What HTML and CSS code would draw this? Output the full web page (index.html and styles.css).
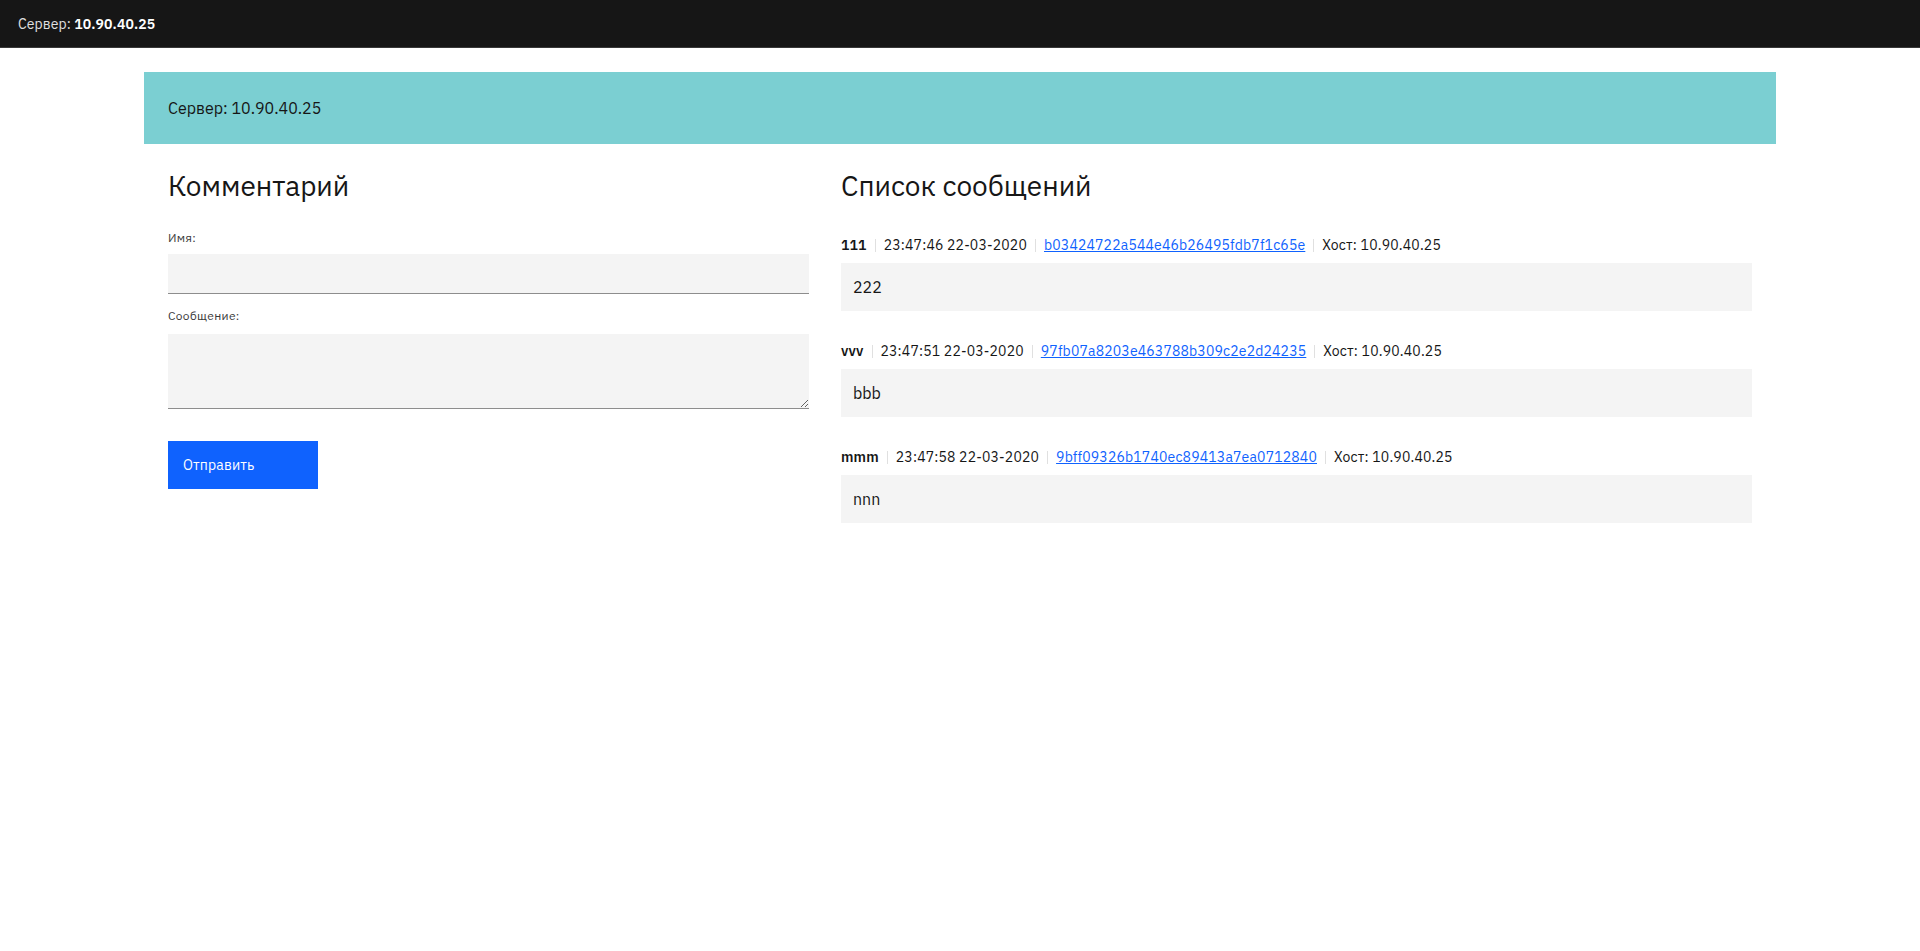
FILE: index.html
```html
<!DOCTYPE html>
<html lang="ru">
<head>
<meta charset="utf-8">
<title>Сервер: 10.90.40.25</title>
<link rel="stylesheet" href="styles.css">
</head>
<body>
<header class="app-header">
  <span class="app-header__prefix">Сервер:</span>&nbsp;<span class="app-header__name">10.90.40.25</span>
</header>
<main class="container">
  <div class="banner">Сервер: 10.90.40.25</div>
  <div class="columns">
    <section class="col-form">
      <h2 class="heading">Комментарий</h2>
      <form class="form">
        <div class="form-item">
          <label class="label" for="name">Имя:</label>
          <input class="text-input" id="name" type="text">
        </div>
        <div class="form-item form-item--area">
          <label class="label label--area" for="msg">Сообщение:</label>
          <textarea class="text-area" id="msg"></textarea>
        </div>
        <button class="btn-primary" type="button">Отправить</button>
      </form>
    </section>
    <section class="col-list">
      <h2 class="heading">Список сообщений</h2>
      <div class="messages">
        <div class="message">
          <div class="meta">
            <span class="meta__author">111</span>
            <span class="meta__sep"></span>
            <span class="meta__item">23:47:46 22-03-2020</span>
            <span class="meta__sep"></span>
            <a class="meta__link" href="#">b03424722a544e46b26495fdb7f1c65e</a>
            <span class="meta__sep"></span>
            <span class="meta__item">Хост: 10.90.40.25</span>
          </div>
          <div class="message__body">222</div>
        </div>
        <div class="message">
          <div class="meta">
            <span class="meta__author">vvv</span>
            <span class="meta__sep"></span>
            <span class="meta__item">23:47:51 22-03-2020</span>
            <span class="meta__sep"></span>
            <a class="meta__link" href="#">97fb07a8203e463788b309c2e2d24235</a>
            <span class="meta__sep"></span>
            <span class="meta__item">Хост: 10.90.40.25</span>
          </div>
          <div class="message__body">bbb</div>
        </div>
        <div class="message">
          <div class="meta">
            <span class="meta__author">mmm</span>
            <span class="meta__sep"></span>
            <span class="meta__item">23:47:58 22-03-2020</span>
            <span class="meta__sep"></span>
            <a class="meta__link" href="#">9bff09326b1740ec89413a7ea0712840</a>
            <span class="meta__sep"></span>
            <span class="meta__item">Хост: 10.90.40.25</span>
          </div>
          <div class="message__body">nnn</div>
        </div>
      </div>
    </section>
  </div>
</main>
</body>
</html>
```

FILE: styles.css
```css
* { box-sizing: border-box; }

html, body {
  margin: 0;
  padding: 0;
  background: #ffffff;
  color: #161616;
  font-family: "IBM Plex Sans", "Open Sans", "Noto Sans", sans-serif;
}

.app-header {
  height: 48px;
  background: #161616;
  border-bottom: 1px solid #393939;
  display: flex;
  align-items: center;
  padding-left: 18px;
  font-size: 14px;
  letter-spacing: 0.1px;
  color: #f4f4f4;
}

.app-header__prefix { font-weight: 400; color: #e0e0e0; }
.app-header__name { font-weight: 600; color: #ffffff; }

.container {
  margin: 24px 144px 0;
}

.banner {
  height: 72px;
  background: #7bcfd2;
  display: flex;
  align-items: center;
  padding-left: 24px;
  font-size: 16px;
  color: #161616;
}

.columns {
  display: grid;
  grid-template-columns: 641px 1fr;
  column-gap: 32px;
  padding: 24px 24px 0;
}

.heading {
  margin: 0;
  font-size: 28px;
  line-height: 36px;
  font-weight: 400;
  color: #161616;
}

.form { margin-top: 26px; }

.form-item { margin-bottom: 14px; }
.form-item--area { margin-bottom: 32px; }

.label {
  display: block;
  font-size: 12px;
  line-height: 16px;
  letter-spacing: 0.32px;
  color: #393939;
  margin-bottom: 8px;
}

.label--area { margin-bottom: 10px; }

.text-input,
.text-area {
  display: block;
  width: 100%;
  background: #f4f4f4;
  border: none;
  border-bottom: 1px solid #8d8d8d;
  outline: none;
  font-family: inherit;
  font-size: 14px;
  color: #161616;
  padding: 0 16px;
}

.text-input { height: 40px; }
.text-area { height: 75px; padding: 11px 16px; resize: vertical; }

.btn-primary {
  display: flex;
  align-items: center;
  height: 48px;
  padding: 0 63px 0 15px;
  background: #0f62fe;
  border: none;
  color: #ffffff;
  font-family: inherit;
  font-size: 14px;
  letter-spacing: 0.16px;
  cursor: pointer;
}

.messages { margin-top: 32px; }

.message { margin-bottom: 31px; }

.meta {
  display: flex;
  align-items: center;
  height: 18px;
  font-size: 14px;
  line-height: 18px;
  letter-spacing: 0.16px;
  color: #161616;
  margin-bottom: 9px;
}

.meta__author { font-weight: 600; }

.meta__sep {
  width: 1px;
  height: 13px;
  background: #e0e0e0;
  margin: 0 8px;
}

.meta__link { color: #0f62fe; text-decoration: underline; }

.message__body {
  height: 48px;
  background: #f4f4f4;
  display: flex;
  align-items: center;
  padding: 0 12px;
  font-size: 16px;
  color: #161616;
}
```
